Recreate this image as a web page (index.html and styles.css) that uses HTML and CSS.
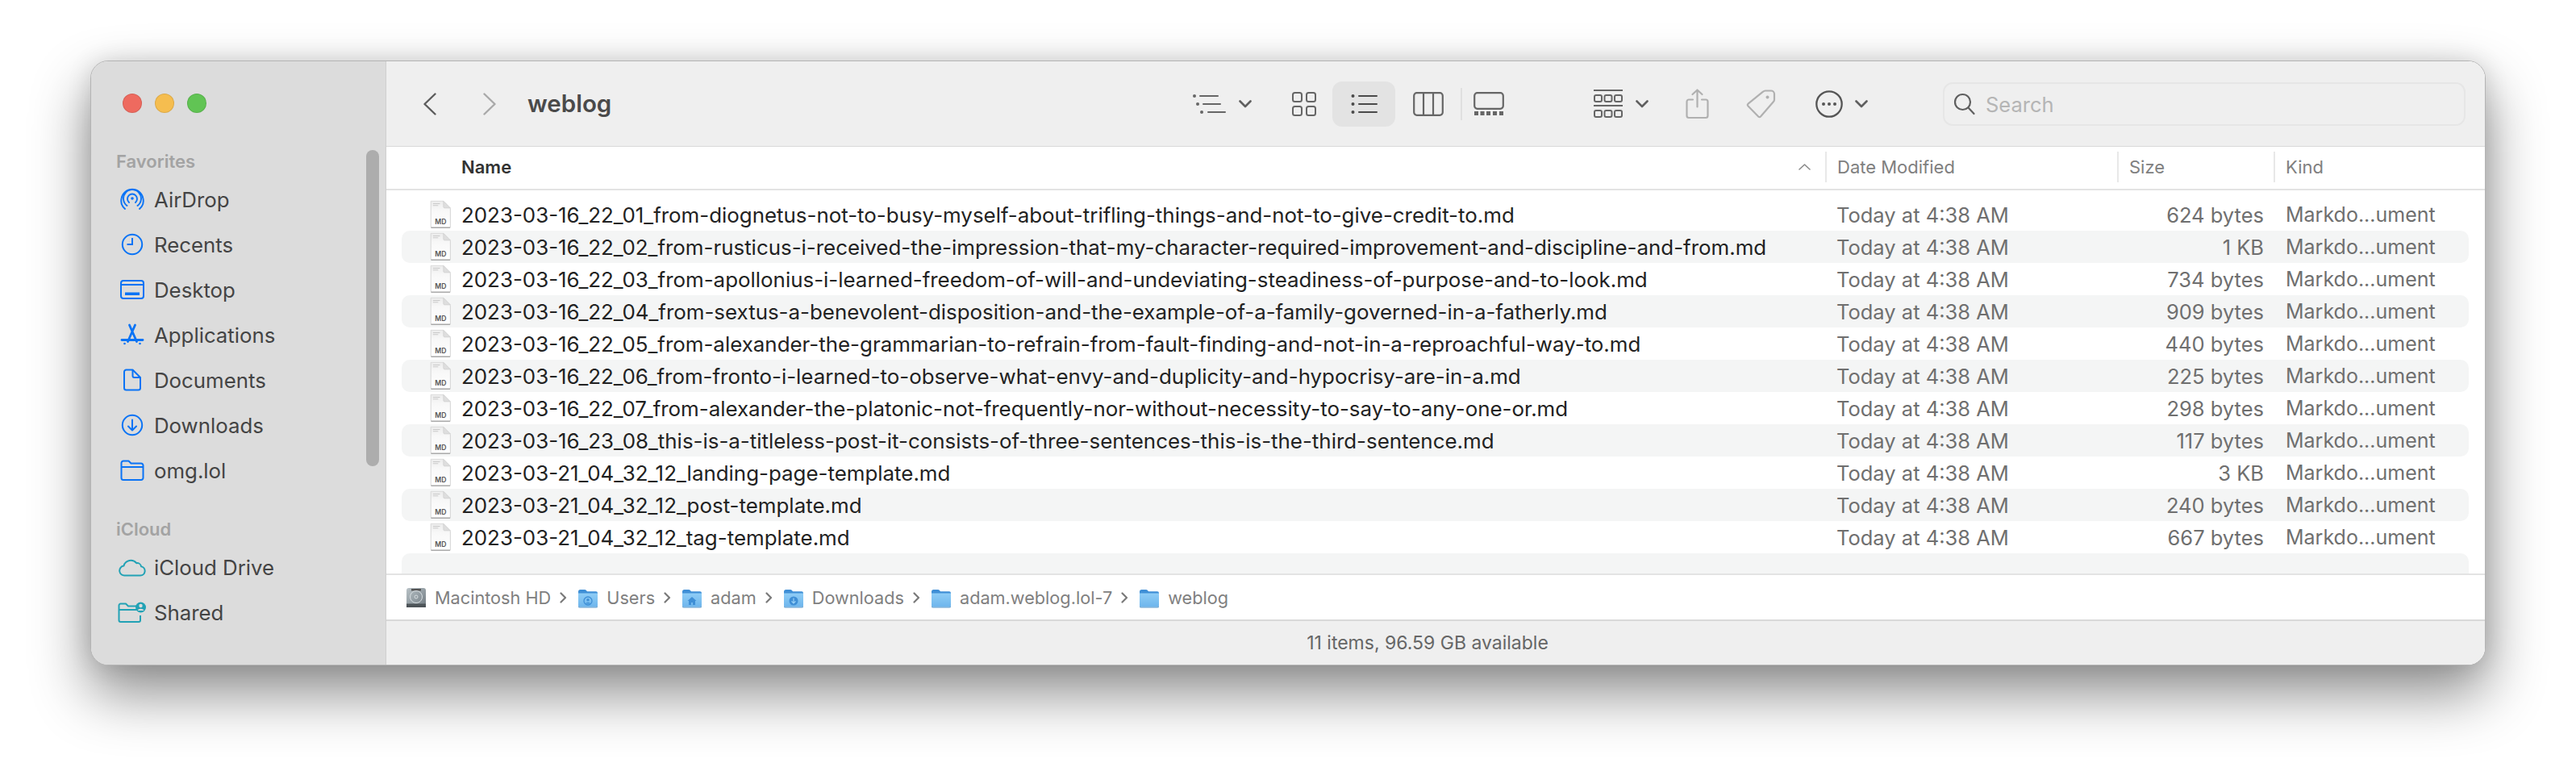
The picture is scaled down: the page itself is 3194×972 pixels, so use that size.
FILE: index.html
```html
<!DOCTYPE html>
<html lang="en">
<head>
<meta charset="utf-8">
<title>weblog</title>
<link rel="stylesheet" href="styles.css">
</head>
<body>
<svg class="defs" width="0" height="0" aria-hidden="true">
  <defs>
    <linearGradient id="pageGrad" x1="0" y1="0" x2="0" y2="1"><stop offset="0" stop-color="#ececec"/><stop offset=".35" stop-color="#f8f8f8"/><stop offset="1" stop-color="#ffffff"/></linearGradient>
    <linearGradient id="folderGrad" x1="0" y1="0" x2="0" y2="1"><stop offset="0" stop-color="#8fcdf6"/><stop offset="1" stop-color="#6db5ec"/></linearGradient>
    <linearGradient id="hdGrad" x1="0" y1="0" x2="1" y2="1"><stop offset="0" stop-color="#b9c2c7"/><stop offset=".6" stop-color="#8d979d"/><stop offset="1" stop-color="#6f787e"/></linearGradient>
    <symbol id="file" viewBox="0 0 26 33">
      <path d="M2 1.500h14.500L24.500 9.500v21a1 1 0 0 1-1 1h-20.500a1 1 0 0 1-1-1z" fill="#a8a8a8" transform="translate(0 .8)"/>
      <path d="M2 1h14.500L24.500 9v21a1 1 0 0 1-1 1H3a1 1 0 0 1-1-1z" fill="url(#pageGrad)" stroke="#cfcfcf" stroke-width=".6"/>
      <path d="M16.500 1v6.500a1.500 1.500 0 0 0 1.500 1.500h6.500z" fill="#dedede" stroke="#c8c8c8" stroke-width=".5"/>
      <path d="M4.500 4h8M4.500 6h6" stroke="#c9c9c9" stroke-width="1"/>
      <text x="13.300" y="27.500" text-anchor="middle" class="md-label">MD</text>
    </symbol>
    <symbol id="folder" viewBox="0 0 26 26">
      <path d="M1 5.500Q1 3 3.500 3h5.500q1.200 0 2 1l1 1.200h11q2 0 2 2V9H1z" fill="#3f8fd6"/>
      <path d="M1 7.500h24v15q0 2-2 2H3q-2 0-2-2z" fill="url(#folderGrad)"/>
      <path d="M1 22.500q0 2 2 2h20q2 0 2-2v1.500q0 1.500-2 1.500H3q-2 0-2-1.500z" fill="#4e92c9"/>
    </symbol>
    <symbol id="chev" viewBox="0 0 16 10"><path d="M1.500 1.500L8 8l6.500-6.500" fill="none" stroke="#5f5f5f" stroke-width="2.600" stroke-linecap="round" stroke-linejoin="round"/></symbol>
    <symbol id="sep" viewBox="0 0 9 14"><path d="M1.500 1.500L7 7l-5.500 5.500" fill="none" stroke="#7a7a7a" stroke-width="2.200" stroke-linecap="round" stroke-linejoin="round"/></symbol>
  </defs>
</svg>
<div class="window">
  <aside class="sidebar">
    <div class="lights"><span class="light red"></span><span class="light yellow"></span><span class="light green"></span></div>
    <div class="scrollbar"></div>
    <div class="sec-label">Favorites</div>
    <div class="side-item"><span class="side-icon">
      <svg width="30" height="30" viewBox="0 0 30 30" fill="none" stroke="#0a73f5" stroke-width="1.900" stroke-linecap="round"><circle cx="15" cy="14" r="1.800" fill="#0a73f5" stroke="none"/><path d="M11 19a6 6 0 1 1 8 0"/><path d="M8.500 23a11 11 0 1 1 13 0"/><path d="M6 27.500a13.500 13.500 0 0 1-4.300-13.500A13.600 13.600 0 0 1 28.300 14a13.500 13.500 0 0 1-4.300 13.500" transform="translate(0 -.5)"/></svg>
    </span><span>AirDrop</span></div>
    <div class="side-item"><span class="side-icon">
      <svg width="28" height="28" viewBox="0 0 28 28" fill="none" stroke="#0a73f5" stroke-width="2"><circle cx="14" cy="14" r="12.200"/><path d="M14 6v8H7.500"/></svg>
    </span><span>Recents</span></div>
    <div class="side-item"><span class="side-icon">
      <svg width="32" height="26" viewBox="0 0 32 26" fill="none" stroke="#0a73f5" stroke-width="2"><rect x="2" y="2" width="28" height="22" rx="3"/><path d="M2 7h28"/><rect x="7" y="16.500" width="18" height="3.500" fill="#0a73f5" stroke="none"/></svg>
    </span><span>Desktop</span></div>
    <div class="side-item"><span class="side-icon">
      <svg width="30" height="28" viewBox="0 0 30 28" fill="none" stroke="#0a73f5" stroke-width="2.800" stroke-linecap="round"><path d="M11.500 2l9 20.500M18.500 2L9.500 22.500"/><path d="M2 20.500h26"/><circle cx="5.500" cy="25" r="1.300" fill="#0a73f5" stroke="none"/><circle cx="24.500" cy="25" r="1.300" fill="#0a73f5" stroke="none"/></svg>
    </span><span>Applications</span></div>
    <div class="side-item"><span class="side-icon">
      <svg width="24" height="28" viewBox="0 0 24 28" fill="none" stroke="#0a73f5" stroke-width="2" stroke-linejoin="round"><path d="M2 4a2.500 2.500 0 0 1 2.500-2.500h8L22 11v13a2.500 2.500 0 0 1-2.500 2.500h-15A2.500 2.500 0 0 1 2 24z"/><path d="M12.500 1.500V9a2 2 0 0 0 2 2H22"/></svg>
    </span><span>Documents</span></div>
    <div class="side-item"><span class="side-icon">
      <svg width="28" height="28" viewBox="0 0 28 28" fill="none" stroke="#0a73f5" stroke-width="2" stroke-linecap="round" stroke-linejoin="round"><circle cx="14" cy="14" r="12.200"/><path d="M14 7.500v12.500M9 15.500l5 5 5-5"/></svg>
    </span><span>Downloads</span></div>
    <div class="side-item"><span class="side-icon">
      <svg width="30" height="26" viewBox="0 0 30 26" fill="none" stroke="#0a73f5" stroke-width="2" stroke-linejoin="round"><path d="M1.500 4a2.500 2.500 0 0 1 2.500-2.500h6.500l3 3H26a2.500 2.500 0 0 1 2.500 2.500v15.500A2.500 2.500 0 0 1 26 25H4a2.500 2.500 0 0 1-2.500-2.500z"/><path d="M1.500 9h27"/></svg>
    </span><span>omg.lol</span></div>
    <div class="sec-label sec-gap">iCloud</div>
    <div class="side-item"><span class="side-icon">
      <svg width="34" height="24" viewBox="0 0 34 24" fill="none" stroke="#22a2b5" stroke-width="2" stroke-linejoin="round"><path d="M8 22.500h19a5.700 5.700 0 0 0 1-11.300 5 5 0 0 0-5.800-4A9 9 0 0 0 6.500 10.500 6 6 0 0 0 8 22.500z"/></svg>
    </span><span>iCloud Drive</span></div>
    <div class="side-item"><span class="side-icon">
      <svg width="36" height="26" viewBox="0 0 36 26" fill="none" stroke="#22a2b5" stroke-width="2" stroke-linejoin="round"><path d="M1.500 4.500a2 2 0 0 1 2-2H10l3 3h13M1.500 10H24M1.500 4.500V23a2 2 0 0 0 2 2H26a2 2 0 0 0 2-2v-6"/><circle cx="28.500" cy="7" r="6.500" fill="#22a2b5" stroke="none"/><circle cx="28.500" cy="5" r="2.200" fill="#dcdcdc" stroke="none"/><path d="M24.500 11a4.200 3.200 0 0 1 8 0z" fill="#dcdcdc" stroke="none"/></svg>
    </span><span>Shared</span></div>
    <div class="sec-label sec-gap-end">Locations</div>
  </aside>
  <main class="pane">
    <header class="toolbar">
      <svg class="tb-back" width="16" height="28" viewBox="0 0 16 28" fill="none" stroke="#5c5c5c" stroke-width="2.400" stroke-linecap="round" stroke-linejoin="round"><path d="M14.500 1.500L1.500 14l13 12.500"/></svg>
      <svg class="tb-forward" width="16" height="28" viewBox="0 0 16 28" fill="none" stroke="#a9a9a9" stroke-width="2.400" stroke-linecap="round" stroke-linejoin="round"><path d="M1.500 1.500L14.500 14l-13 12.500"/></svg>
      <div class="title">weblog</div>
      <svg class="tb-group" width="42" height="24" viewBox="0 0 42 24" fill="#666" stroke="#666" stroke-width="2" stroke-linecap="round"><circle cx="3" cy="2" r="2" stroke="none"/><circle cx="7" cy="12" r="2" stroke="none"/><circle cx="12" cy="22" r="2" stroke="none"/><path d="M10 2h22M14 12h21M20 22h21"/></svg>
      <svg class="tb-chev" width="16" height="10"><use href="#chev"/></svg>
      <svg class="tb-grid" width="30" height="30" viewBox="0 0 30 30" fill="none" stroke="#666" stroke-width="2"><rect x="1" y="1" width="11" height="11" rx="2.500"/><rect x="18" y="1" width="11" height="11" rx="2.500"/><rect x="1" y="18" width="11" height="11" rx="2.500"/><rect x="18" y="18" width="11" height="11" rx="2.500"/></svg>
      <div class="tb-selected">
        <svg width="33" height="24" viewBox="0 0 33 24" fill="#4a4a4a" stroke="#4a4a4a" stroke-width="2" stroke-linecap="round"><circle cx="2.500" cy="2" r="2" stroke="none"/><circle cx="2.500" cy="12" r="2" stroke="none"/><circle cx="2.500" cy="22" r="2" stroke="none"/><path d="M10 2h22M10 12h22M10 22h22"/></svg>
      </div>
      <svg class="tb-column" width="38" height="30" viewBox="0 0 38 30" fill="none" stroke="#666" stroke-width="2.200"><rect x="1.200" y="1.200" width="35.600" height="27.600" rx="3.500"/><path d="M13 1v28M25 1v28"/></svg>
      <div class="tb-divider"></div>
      <svg class="tb-gallery" width="38" height="30" viewBox="0 0 38 30" fill="#666"><rect x="1.200" y="1.200" width="35.600" height="19.600" rx="3.500" fill="none" stroke="#666" stroke-width="2.200"/><rect x="1" y="24" width="5" height="5"/><rect x="8.500" y="24" width="5" height="5"/><rect x="16" y="24" width="5" height="5"/><rect x="24" y="24" width="5" height="5"/><rect x="32" y="24" width="5" height="5"/></svg>
      <svg class="tb-group2" width="36" height="36" viewBox="0 0 36 36" fill="none" stroke="#666" stroke-width="2"><path d="M0 1h36M0 20h36" stroke-width="2.200"/><rect x="1" y="7" width="9" height="8" rx="2"/><rect x="13.500" y="7" width="9" height="8" rx="2"/><rect x="26" y="7" width="9" height="8" rx="2"/><rect x="1" y="26" width="9" height="8" rx="2"/><rect x="13.500" y="26" width="9" height="8" rx="2"/><rect x="26" y="26" width="9" height="8" rx="2"/></svg>
      <svg class="tb-chev" width="16" height="10"><use href="#chev"/></svg>
      <svg class="tb-share" width="29" height="38" viewBox="0 0 29 38" fill="none" stroke="#b0b0b0" stroke-width="2.200" stroke-linecap="round" stroke-linejoin="round"><path d="M14.500 1.500v21M8.500 7l6-5.500 6 5.500"/><path d="M9 13.500H4a2.500 2.500 0 0 0-2.500 2.500v17.500A2.500 2.500 0 0 0 4 36h21a2.500 2.500 0 0 0 2.500-2.500V16a2.500 2.500 0 0 0-2.500-2.500h-5"/></svg>
      <svg class="tb-tag" width="37" height="37" viewBox="0 0 37 37" fill="none" stroke="#b0b0b0" stroke-width="2.200" stroke-linejoin="round"><path d="M24 2.500h7a4 4 0 0 1 4 4v7a4 4 0 0 1-1.200 2.800L18 34.500a2 2 0 0 1-2.800 0L2.500 21.500a2 2 0 0 1 0-2.800L21 3.700A4 4 0 0 1 24 2.500z"/><circle cx="26.500" cy="10.500" r="2" fill="#b0b0b0" stroke="none"/></svg>
      <svg class="tb-more" width="34" height="34" viewBox="0 0 34 34" fill="#555"><circle cx="17" cy="17" r="15.700" fill="none" stroke="#555" stroke-width="2.300"/><circle cx="10" cy="17" r="2"/><circle cx="17" cy="17" r="2"/><circle cx="24" cy="17" r="2"/></svg>
      <svg class="tb-chev-more" width="16" height="10"><use href="#chev"/></svg>
      <div class="search">
        <svg width="28" height="28" viewBox="0 0 28 28" fill="none" stroke="#5f5f5f" stroke-width="2.200" stroke-linecap="round"><circle cx="11.500" cy="11.500" r="9.500"/><path d="M18.500 18.500l7 7.500"/></svg>
        <span>Search</span>
      </div>
    </header>
    <div class="col-head">
      <div class="h-name"><span>Name</span><svg width="15" height="8" viewBox="0 0 15 8" fill="none" stroke="#8a8a8a" stroke-width="1.600" stroke-linecap="round" stroke-linejoin="round"><path d="M1 7l6.500-6L14 7"/></svg></div>
      <div class="h-col">Date Modified</div>
      <div class="h-col">Size</div>
      <div class="h-col">Kind</div>
    </div>
    <div class="list">
      <div class="row"><div class="c-name"><svg><use href="#file"/></svg><span>2023-03-16_22_01_from-diognetus-not-to-busy-myself-about-trifling-things-and-not-to-give-credit-to.md</span></div><div class="c-date">Today at 4:38 AM</div><div class="c-size">624 bytes</div><div class="c-kind">Markdo...ument</div></div>
      <div class="row"><div class="c-name"><svg><use href="#file"/></svg><span>2023-03-16_22_02_from-rusticus-i-received-the-impression-that-my-character-required-improvement-and-discipline-and-from.md</span></div><div class="c-date">Today at 4:38 AM</div><div class="c-size">1 KB</div><div class="c-kind">Markdo...ument</div></div>
      <div class="row"><div class="c-name"><svg><use href="#file"/></svg><span>2023-03-16_22_03_from-apollonius-i-learned-freedom-of-will-and-undeviating-steadiness-of-purpose-and-to-look.md</span></div><div class="c-date">Today at 4:38 AM</div><div class="c-size">734 bytes</div><div class="c-kind">Markdo...ument</div></div>
      <div class="row"><div class="c-name"><svg><use href="#file"/></svg><span>2023-03-16_22_04_from-sextus-a-benevolent-disposition-and-the-example-of-a-family-governed-in-a-fatherly.md</span></div><div class="c-date">Today at 4:38 AM</div><div class="c-size">909 bytes</div><div class="c-kind">Markdo...ument</div></div>
      <div class="row"><div class="c-name"><svg><use href="#file"/></svg><span>2023-03-16_22_05_from-alexander-the-grammarian-to-refrain-from-fault-finding-and-not-in-a-reproachful-way-to.md</span></div><div class="c-date">Today at 4:38 AM</div><div class="c-size">440 bytes</div><div class="c-kind">Markdo...ument</div></div>
      <div class="row"><div class="c-name"><svg><use href="#file"/></svg><span>2023-03-16_22_06_from-fronto-i-learned-to-observe-what-envy-and-duplicity-and-hypocrisy-are-in-a.md</span></div><div class="c-date">Today at 4:38 AM</div><div class="c-size">225 bytes</div><div class="c-kind">Markdo...ument</div></div>
      <div class="row"><div class="c-name"><svg><use href="#file"/></svg><span>2023-03-16_22_07_from-alexander-the-platonic-not-frequently-nor-without-necessity-to-say-to-any-one-or.md</span></div><div class="c-date">Today at 4:38 AM</div><div class="c-size">298 bytes</div><div class="c-kind">Markdo...ument</div></div>
      <div class="row"><div class="c-name"><svg><use href="#file"/></svg><span>2023-03-16_23_08_this-is-a-titleless-post-it-consists-of-three-sentences-this-is-the-third-sentence.md</span></div><div class="c-date">Today at 4:38 AM</div><div class="c-size">117 bytes</div><div class="c-kind">Markdo...ument</div></div>
      <div class="row"><div class="c-name"><svg><use href="#file"/></svg><span>2023-03-21_04_32_12_landing-page-template.md</span></div><div class="c-date">Today at 4:38 AM</div><div class="c-size">3 KB</div><div class="c-kind">Markdo...ument</div></div>
      <div class="row"><div class="c-name"><svg><use href="#file"/></svg><span>2023-03-21_04_32_12_post-template.md</span></div><div class="c-date">Today at 4:38 AM</div><div class="c-size">240 bytes</div><div class="c-kind">Markdo...ument</div></div>
      <div class="row"><div class="c-name"><svg><use href="#file"/></svg><span>2023-03-21_04_32_12_tag-template.md</span></div><div class="c-date">Today at 4:38 AM</div><div class="c-size">667 bytes</div><div class="c-kind">Markdo...ument</div></div>
      <div class="row"></div>
    </div>
    <nav class="pathbar">
      <svg width="26" height="26" viewBox="0 0 26 26"><rect x="1" y="1" width="24" height="24" rx="3" fill="url(#hdGrad)"/><rect x="7" y="2" width="12" height="2.500" fill="#555"/><circle cx="13" cy="12" r="7.500" fill="none" stroke="#d7dde0" stroke-width="1"/><circle cx="13" cy="12" r="2" fill="none" stroke="#d7dde0" stroke-width="1"/><rect x="1" y="20.500" width="24" height="4.500" fill="#4d5458"/></svg>
      <span class="crumb">Macintosh HD</span><svg class="sep"><use href="#sep"/></svg>
      <span class="folder-wrap"><svg width="26" height="26"><use href="#folder"/></svg><svg class="glyph" width="12" height="12" viewBox="0 0 12 12" fill="#3f8fd6"><circle cx="6" cy="6" r="5" fill="none" stroke="#3f8fd6" stroke-width="1.300"/><circle cx="6" cy="4.800" r="1.700"/><path d="M2.800 9.500a3.400 2.600 0 0 1 6.400 0z"/></svg></span>
      <span class="crumb">Users</span><svg class="sep"><use href="#sep"/></svg>
      <span class="folder-wrap"><svg width="26" height="26"><use href="#folder"/></svg><svg class="glyph" width="12" height="12" viewBox="0 0 12 12" fill="#3f8fd6"><path d="M6 1L0.500 6H2v5h3V8h2v3h3V6h1.500z"/></svg></span>
      <span class="crumb">adam</span><svg class="sep"><use href="#sep"/></svg>
      <span class="folder-wrap"><svg width="26" height="26"><use href="#folder"/></svg><svg class="glyph" width="12" height="12" viewBox="0 0 12 12"><circle cx="6" cy="6" r="5.500" fill="#3f8fd6"/><path d="M6 2.500v6M3.500 6.300L6 8.800l2.500-2.500" fill="none" stroke="#9ad2f7" stroke-width="1.200"/></svg></span>
      <span class="crumb">Downloads</span><svg class="sep"><use href="#sep"/></svg>
      <span class="folder-wrap"><svg width="26" height="26"><use href="#folder"/></svg></span>
      <span class="crumb">adam.weblog.lol-7</span><svg class="sep"><use href="#sep"/></svg>
      <span class="folder-wrap"><svg width="26" height="26"><use href="#folder"/></svg></span>
      <span class="crumb">weblog</span>
    </nav>
    <footer class="status">11 items, 96.59 GB available</footer>
  </main>
</div>
</body>
</html>
```
FILE: styles.css
```css
* { box-sizing: border-box; }
html, body { margin: 0; height: 100%; }
body {
  background: #fff;
  font-family: Inter, "Liberation Sans", sans-serif;
  padding: 75px 0 0 112px;
  overflow: hidden;
}
.defs { position: absolute; }
.md-label { font: 600 8px Inter, sans-serif; fill: #555; }

.window {
  display: flex;
  width: 2970px;
  height: 750px;
  border: 1px solid #b4b4b4;
  border-radius: 22px;
  overflow: hidden;
  background: #efefef;
  box-shadow: 0 34px 70px 2px rgba(0,0,0,.44), 0 0 30px rgba(0,0,0,.12);
}

/* sidebar */
.sidebar {
  position: relative;
  flex: 0 0 366px;
  height: 100%;
  overflow: hidden;
  padding: 105px 0 0 31px;
  background: #dcdcdc;
  border-right: 1px solid #cfcfcf;
  color: #444;
  font-size: 25.800px;
}
.lights { position: absolute; top: 40px; left: 39px; display: flex; gap: 16px; }
.light { width: 24px; height: 24px; border-radius: 50%; border: 1px solid rgba(0,0,0,.1); }
.red { background: #ee6a5f; }
.yellow { background: #f5bd4f; }
.green { background: #61c454; }
.scrollbar { position: absolute; left: 341px; top: 110px; width: 16px; height: 392px; border-radius: 8px; background: #adadad; }
.sec-label { height: 38px; line-height: 38px; font-size: 22px; font-weight: 600; color: #a3a3a3; }
.sec-gap { margin-top: 26px; }
.sec-gap-end { margin-top: 28px; }
.side-item { display: flex; align-items: center; height: 56px; }
.side-icon { display: flex; justify-content: center; align-items: center; width: 40px; margin-right: 7px; }

/* main */
.pane { flex: 1; min-width: 0; display: flex; flex-direction: column; background: #fff; }
.toolbar {
  flex: 0 0 106px;
  display: flex;
  align-items: center;
  padding-left: 46px;
  background: #efefef;
  border-bottom: 1px solid #d9d9d9;
}
.tb-forward { margin-left: 58px; }
.title { width: 824px; margin-left: 39px; margin-bottom: 2px; font-size: 29.500px; font-weight: 600; color: #4a4a4a; }
.tb-chev { margin-left: 16px; }
.tb-grid { margin-left: 50px; }
.tb-selected {
  display: flex; align-items: center; justify-content: center;
  width: 78px; height: 56px; margin-left: 20px;
  border-radius: 12px; background: #e3e3e3;
}
.tb-column { margin-left: 22px; }
.tb-divider { width: 2px; height: 40px; margin-left: 21px; background: #e0e0e0; }
.tb-gallery { margin-left: 14px; }
.tb-group2 { margin-left: 111px; }
.tb-share { margin-left: 46px; }
.tb-tag { margin-left: 46px; }
.tb-more { margin-left: 49px; }
.tb-chev-more { margin-left: 15px; }
.search {
  display: flex; align-items: center;
  width: 648px; height: 54px; margin-left: 93px; padding-left: 11px;
  border: 2px solid #e6e6e6; border-radius: 12px;
  color: #b5b5b5; font-size: 25.500px;
}
.search span { margin: 2px 0 0 12px; }

/* column header */
.col-head {
  flex: 0 0 54px;
  display: grid;
  grid-template-columns: 1784px 362px 194px 1fr;
  align-items: center;
  padding-bottom: 3px;
  background: #fff;
  border-bottom: 2px solid #e3e3e3;
  font-size: 22px;
  color: #808080;
}
.h-name { display: flex; align-items: center; justify-content: space-between; padding: 0 18px 0 93px; font-weight: 600; color: #333; }
.h-col { height: 38px; line-height: 38px; padding-left: 13px; border-left: 2px solid #e8e8e8; }

/* rows */
.list { flex: 1; min-height: 0; overflow: hidden; padding: 10px 20px 0 19px; background: #fff; }
.row {
  display: grid;
  grid-template-columns: 1779px 348px 182px 1fr;
  align-items: center;
  height: 40px;
  border-radius: 10px;
  font-size: 25.500px;
  color: #6f6f6f;
}
.row:nth-child(even) { background: #f4f5f5; }
.c-name { display: flex; align-items: center; padding-left: 34px; color: #222; font-size: 25.900px; white-space: nowrap; }
.c-name svg { flex: none; width: 28px; height: 36px; }
.c-name span { margin-left: 12px; }
.c-size { text-align: right; }
.c-kind { padding-left: 27px; font-size: 25px; }

/* path bar */
.pathbar {
  flex: 0 0 59px;
  display: flex;
  align-items: center;
  padding-left: 24px;
  background: #fff;
  border-top: 2px solid #e3e3e3;
  border-bottom: 2px solid #d9d9d9;
  font-size: 21.700px;
  color: #808080;
}
.crumb { margin-left: 10px; }
.sep { flex: none; width: 9px; height: 14px; margin: 0 13px 0 11px; }
.folder-wrap { position: relative; display: flex; }
.glyph { position: absolute; left: 7px; top: 11px; }

/* status */
.status {
  flex: 0 0 54px;
  display: flex; align-items: center; justify-content: center;
  padding-right: 20px;
  background: #efefef;
  color: #666;
  font-size: 23px;
}
```
